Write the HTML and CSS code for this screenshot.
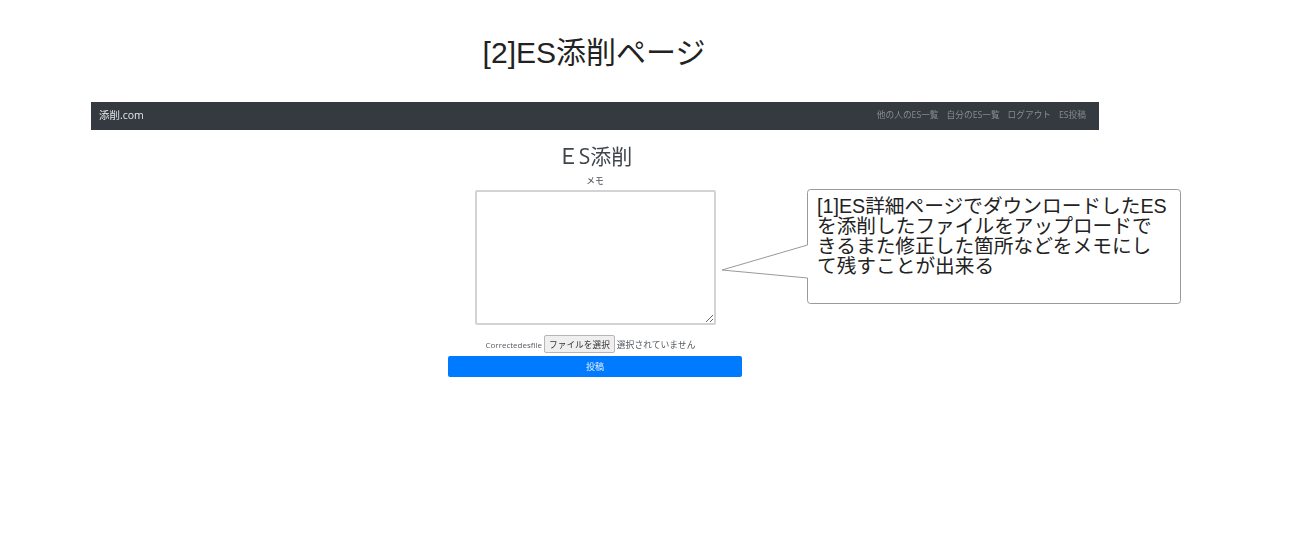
FILE: index.html
```html
<!DOCTYPE html>
<html lang="ja">
<head>
    <meta charset="UTF-8">
    <meta name="viewport" content="width=device-width, initial-scale=1.0">
    <title>ES添削ページ</title>
    <link rel="stylesheet" href="styles.css">
</head>
<body>
    <div class="slide">
        <h1 class="slideTitle">[2]ES添削ページ</h1>
        <div class="shot">
            <nav class="navbar">
                <a class="brand" href="#">添削.com</a>
                <div class="navLinks">
                    <a href="#">他の人のES一覧</a>
                    <a href="#">自分のES一覧</a>
                    <a href="#">ログアウト</a>
                    <a href="#">ES投稿</a>
                </div>
            </nav>
            <form class="esForm">
                <h2 class="formTitle">ＥS添削</h2>
                <label class="memoLabel" for="memo">メモ</label>
                <textarea id="memo" class="memo"></textarea>
                <div class="fileRow">
                    <span class="fileLabel">Correctedesfile</span>
                    <button type="button" class="fileBtn">ファイルを選択</button>
                    <span class="fileName">選択されていません</span>
                </div>
                <button type="button" class="submitBtn">投稿</button>
            </form>
        </div>
        <div class="callout">
            <svg class="calloutShape" width="462" height="116" viewBox="0 0 462 116">
                <path d="M88.500 3.500a3 3 0 0 1 3-3h367a3 3 0 0 1 3 3v108a3 3 0 0 1-3 3h-367a3 3 0 0 1-3-3V89L3 81l85.500-25z" fill="#fff" stroke="#999"/>
            </svg>
            <p class="calloutText">[1]ES詳細ページでダウンロードしたES<br>を添削したファイルをアップロードで<br>きるまた修正した箇所などをメモにし<br>て残すことが出来る</p>
        </div>
    </div>
</body>
</html>
```

FILE: styles.css
```css
* {
    box-sizing: border-box;
}
body {
    margin: 0;
    background-color: #fff;
    font-family: "Liberation Sans", "Noto Sans CJK JP", sans-serif;
}
.slide {
    position: relative;
    width: 1310px;
    height: 541px;
    padding: 35px 0 0 91px;
    overflow: hidden;
}
.slideTitle {
    width: 1006px;
    margin: 0 0 32px;
    height: 35px;
    font-size: 30px;
    line-height: 35px;
    font-weight: normal;
    text-align: center;
    color: #222;
}
.shot {
    width: 1008px;
    font-family: "Open Sans", "Noto Sans CJK JP", sans-serif;
    color: #495057;
    filter: blur(0.4px);
}
.navbar {
    display: flex;
    align-items: center;
    justify-content: space-between;
    height: 28px;
    padding: 0 13px 3px 8px;
    background-color: #343a40;
}
.navbar a {
    text-decoration: none;
}
.brand {
    font-size: 10.500px;
    color: #e4e6e8;
}
.navLinks {
    display: flex;
    gap: 8px;
}
.navLinks a {
    font-size: 8.700px;
    color: #888c90;
}
.esForm {
    display: flex;
    flex-direction: column;
    align-items: center;
    padding-top: 12px;
}
.formTitle {
    margin: 0;
    font-size: 21px;
    line-height: 28px;
    font-weight: normal;
    color: #3f464c;
}
.memoLabel {
    margin-top: 5px;
    font-size: 8.800px;
    line-height: 12px;
}
.memo {
    display: block;
    width: 241px;
    height: 135px;
    margin-top: 3px;
    border: 2px solid #d3d3d3;
    border-radius: 2px;
    background-color: #fff;
}
.fileRow {
    display: flex;
    align-items: center;
    gap: 2px;
    height: 18px;
    margin-top: 10px;
    padding-right: 9px;
    font-size: 8.800px;
    color: #555b61;
}
.fileLabel {
    font-size: 8px;
}
.fileBtn {
    height: 18px;
    padding: 0 4px;
    border: 1px solid #b5b5b5;
    border-radius: 2px;
    background-color: #efefef;
    font-family: inherit;
    font-size: 8.700px;
    color: #333;
}
.submitBtn {
    width: 294px;
    height: 21px;
    margin-top: 3px;
    border: 0;
    border-radius: 2px;
    background-color: #007bff;
    font-family: inherit;
    font-size: 9px;
    color: #e8f2ff;
}
.callout {
    position: absolute;
    left: 719px;
    top: 189px;
    width: 464px;
    height: 116px;
}
.calloutShape {
    display: block;
}
.calloutText {
    position: absolute;
    left: 98px;
    top: 6.500px;
    margin: 0;
    font-size: 19.700px;
    line-height: 20.300px;
    white-space: nowrap;
    color: #222;
}
```
